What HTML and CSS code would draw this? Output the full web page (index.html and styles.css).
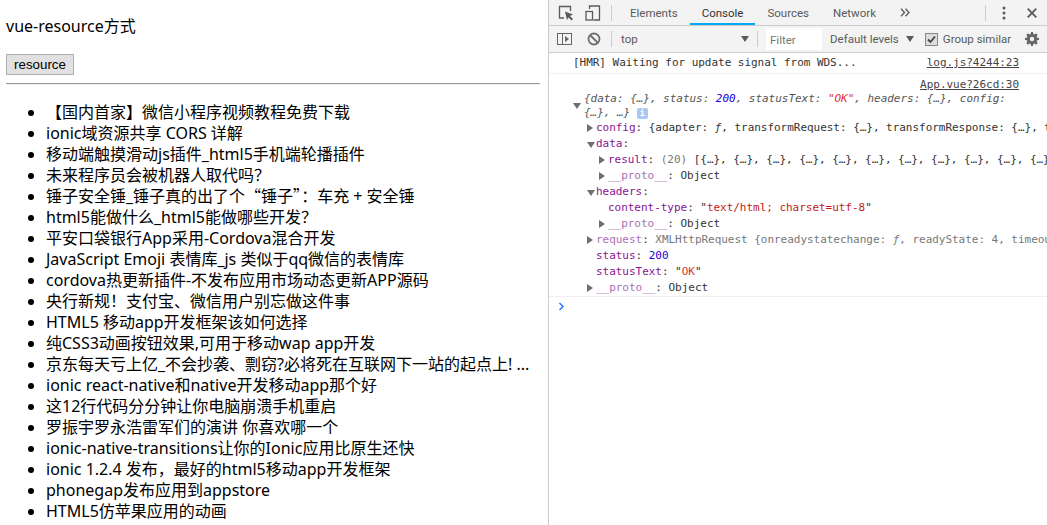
FILE: index.html
```html
<!DOCTYPE html>
<html lang="zh-CN">
<head>
    <meta charset="UTF-8">
    <title>vue-resource</title>
    <link rel="stylesheet" href="styles.css">
</head>
<body>
    <div class="page">
        <p class="page-title">vue-resource方式</p>
        <button class="page-btn">resource</button>
        <hr class="page-rule">
        <ul class="news-list">
            <li>【国内首家】微信小程序视频教程免费下载</li>
            <li>ionic域资源共享 CORS 详解</li>
            <li>移动端触摸滑动js插件_html5手机端轮播插件</li>
            <li>未来程序员会被机器人取代吗？</li>
            <li>锤子安全锤_锤子真的出了个<span class="cjk">“锤子”</span>：车充 + 安全锤</li>
            <li>html5能做什么_html5能做哪些开发？</li>
            <li>平安口袋银行App采用-Cordova混合开发</li>
            <li>JavaScript Emoji 表情库_js 类似于qq微信的表情库</li>
            <li>cordova热更新插件-不发布应用市场动态更新APP源码</li>
            <li>央行新规！支付宝、微信用户别忘做这件事</li>
            <li>HTML5 移动app开发框架该如何选择</li>
            <li>纯CSS3动画按钮效果,可用于移动wap app开发</li>
            <li>京东每天亏上亿_不会抄袭、剽窃?必将死在互联网下一站的起点上! ...</li>
            <li>ionic react-native和native开发移动app那个好</li>
            <li>这12行代码分分钟让你电脑崩溃手机重启</li>
            <li>罗振宇罗永浩雷军们的演讲 你喜欢哪一个</li>
            <li>ionic-native-transitions让你的Ionic应用比原生还快</li>
            <li>ionic 1.2.4 发布，最好的html5移动app开发框架</li>
            <li>phonegap发布应用到appstore</li>
            <li>HTML5仿苹果应用的动画</li>
        </ul>
    </div>

    <div class="devtools">
        <div class="tab-bar">
            <svg class="tb-icon inspect-icon" width="16" height="16" viewBox="0 0 16 16"><path d="M6 13H1.500V1.500h11V6" fill="none" stroke="#5a5a5a" stroke-width="1.300"/><path d="M7 6.500l8 3-3 1.500 3 3-1.400 1.400-3-3L9 15z" fill="#5a5a5a"/></svg>
            <svg class="tb-icon device-icon" width="16" height="16" viewBox="0 0 16 16"><path d="M4.500 4V1h10v14H8.500" fill="none" stroke="#5a5a5a" stroke-width="1.300"/><rect x="1" y="6.500" width="6.500" height="8.500" fill="none" stroke="#5a5a5a" stroke-width="1.300"/></svg>
            <span class="tb-sep"></span>
            <span class="tab first">Elements</span>
            <span class="tab active">Console</span>
            <span class="tab">Sources</span>
            <span class="tab">Network</span>
            <svg class="tab-more" width="10" height="9" viewBox="0 0 10 9"><path d="M1 .8l3.500 3.700L1 8.200M5.500 .8L9 4.500 5.500 8.200" fill="none" stroke="#5a5a5a" stroke-width="1.300"/></svg>
            <span class="tab-spacer"></span>
            <span class="tb-sep"></span>
            <svg class="tb-menu" width="4" height="14" viewBox="0 0 4 14"><circle cx="2" cy="2" r="1.500" fill="#5a5a5a"/><circle cx="2" cy="7" r="1.500" fill="#5a5a5a"/><circle cx="2" cy="12" r="1.500" fill="#5a5a5a"/></svg>
            <svg class="tb-close" width="10" height="10" viewBox="0 0 10 10"><path d="M.7.7l8.600 8.600M9.300.7L.7 9.300" stroke="#5a5a5a" stroke-width="1.800"/></svg>
        </div>
        <div class="filter-bar">
            <svg class="sidebar-icon" width="15" height="12" viewBox="0 0 15 12"><rect x=".5" y=".5" width="14" height="11" fill="none" stroke="#666"/><path d="M5.500 1v10" stroke="#666"/><path d="M8 3l4 3-4 3z" fill="#666"/></svg>
            <svg class="clear-icon" width="14" height="14" viewBox="0 0 14 14"><circle cx="7" cy="7" r="5.500" fill="none" stroke="#6e6e6e" stroke-width="1.800"/><path d="M3 3l8 8" stroke="#6e6e6e" stroke-width="1.800"/></svg>
            <span class="tb-sep"></span>
            <span class="context">top</span>
            <span class="caret"></span>
            <span class="tb-sep"></span>
            <span class="filter-input">Filter</span>
            <span class="levels">Default levels</span>
            <span class="caret small"></span>
            <span class="check"><svg width="9" height="9" viewBox="0 0 9 9"><path d="M1 4.500l2.500 2.500L8 1.500" fill="none" stroke="#444" stroke-width="1.800"/></svg></span>
            <span class="group">Group similar</span>
            <svg class="gear" width="14" height="14" viewBox="0 0 14 14"><path fill-rule="evenodd" fill="#666" d="M6 0h2l.3 1.900 1.100.5L11 1.300l1.700 1.700-1.100 1.600.5 1.100L14 6v2l-1.900.3-.5 1.100 1.100 1.600-1.700 1.700-1.600-1.100-1.100.5L8 14H6l-.3-1.900-1.100-.5L3 12.700 1.300 11l1.100-1.600-.5-1.100L0 8V6l1.900-.3.5-1.100L1.300 3 3 1.300l1.600 1.100 1.100-.5zM7 4.800a2.200 2.200 0 1 0 0 4.400 2.200 2.200 0 0 0 0-4.400z"/></svg>
        </div>
        <div class="console">
            <div class="msg msg-first">
                <a class="src">log.js?4244:23</a>
                <span class="line-text">[HMR] Waiting for update signal from WDS...</span>
            </div>
            <div class="msg msg-obj">
                <div class="src-row"><a class="src">App.vue?26cd:30</a></div>
                <div class="obj-head">
                    <span class="arrow open head-arrow"></span>
                    <div class="obj-summary"><i>{data: {…}, status: <b class="num">200</b>, statusText: <b class="str">"OK"</b>, headers: {…}, config:<br>{…}, …}</i> <span class="info">i</span></div>
                </div>
                <div class="row l1"><span class="arrow"></span><span class="key">config</span>: {adapter: <i>ƒ</i>, transformRequest: {…}, transformResponse: {…}, t</div>
                <div class="row l1"><span class="arrow open"></span><span class="key">data</span>:</div>
                <div class="row l2"><span class="arrow"></span><span class="key">result</span>: <span class="dim">(20)</span> [{…}, {…}, {…}, {…}, {…}, {…}, {…}, {…}, {…}, {…}, {…}</div>
                <div class="row l2"><span class="arrow"></span><span class="key pale">__proto__</span>: Object</div>
                <div class="row l1"><span class="arrow open"></span><span class="key">headers</span>:</div>
                <div class="row l2"><span class="arrow none"></span><span class="key">content-type</span>: "<span class="str-dark">text/html; charset=utf-8</span>"</div>
                <div class="row l2"><span class="arrow"></span><span class="key pale">__proto__</span>: Object</div>
                <div class="row l1"><span class="arrow"></span><span class="key pale">request</span>: <span class="dim">XMLHttpRequest {onreadystatechange: <i>ƒ</i>, readyState: 4, timeou</span></div>
                <div class="row l1"><span class="arrow none"></span><span class="key">status</span>: <span class="num">200</span></div>
                <div class="row l1"><span class="arrow none"></span><span class="key">statusText</span>: "<span class="str">OK</span>"</div>
                <div class="row l1"><span class="arrow"></span><span class="key pale">__proto__</span>: Object</div>
            </div>
            <div class="prompt"><svg width="7" height="9" viewBox="0 0 7 9"><path d="M1.500 1l3.500 3.500L1.500 8" fill="none" stroke="#367cf1" stroke-width="1.600"/></svg></div>
        </div>
    </div>
</body>
</html>
```

FILE: styles.css
```css
html, body {
    height: 100%;
    margin: 0;
    overflow: hidden;
}
body {
    display: flex;
    background-color: #fff;
    font-family: "Noto Sans", "Noto Sans CJK SC", sans-serif;
}

/* left page */
.page {
    width: 549px;
    flex: none;
    box-sizing: border-box;
    padding: 16px 8px 0 6px;
    border-right: 1px solid #ccc;
    font-size: 16px;
    color: #000;
}
.page-title {
    margin: 0 0 17px;
    line-height: 21px;
}
.page-btn {
    display: block;
    width: 68px;
    height: 21px;
    padding: 0;
    font: 13.33px "Liberation Sans", sans-serif;
    color: #000;
    background-color: #e1e1e1;
    border: 1px solid #adadad;
}
.page-rule {
    margin: 8px 0 0;
    border: none;
    border-top: 1px solid #9a9a9a;
    border-bottom: 1px solid #eee;
    height: 0;
}
.news-list {
    margin: 17px 0 0;
    padding-left: 40px;
    line-height: 21px;
    white-space: nowrap;
}
.cjk {
    font-family: "Noto Sans CJK SC", sans-serif;
    line-height: 1;
}

/* devtools */
.devtools {
    flex: 1;
    min-width: 0;
    display: flex;
    flex-direction: column;
    font-family: Roboto, sans-serif;
    font-size: 11.5px;
    color: #5a5a5a;
}
.tab-bar {
    height: 25px;
    flex: none;
    display: flex;
    align-items: center;
    background-color: #f3f3f3;
    border-bottom: 1px solid #ccc;
}
.tb-icon { flex: none; }
.inspect-icon { margin-left: 9px; }
.device-icon { margin-left: 11px; }
.tb-sep {
    width: 1px;
    height: 16px;
    background-color: #ccc;
    flex: none;
}
.device-icon + .tb-sep { margin-left: 10px; }
.tab {
    height: 25px;
    box-sizing: border-box;
    line-height: 27px;
    padding: 0 12px;
    flex: none;
}
.tab.first { margin-left: 6px; }
.tab.active {
    color: #333;
    border-bottom: 2px solid #03a9f4;
}
.tab-more { margin-left: 12px; flex: none; }
.tab-spacer { flex: 1; }
.tb-menu { margin: 0 21px 0 16px; flex: none; }
.tb-close { margin-right: 10px; flex: none; }

.filter-bar {
    height: 26px;
    flex: none;
    display: flex;
    align-items: center;
    background-color: #f3f3f3;
    border-bottom: 1px solid #ccc;
}
.sidebar-icon { margin-left: 8px; flex: none; }
.clear-icon { margin-left: 15px; flex: none; }
.clear-icon + .tb-sep { margin-left: 10px; }
.context { margin-left: 9px; width: 120px; flex: none; }
.caret {
    width: 0;
    height: 0;
    border-left: 4px solid transparent;
    border-right: 4px solid transparent;
    border-top: 6px solid #5a5a5a;
    flex: none;
}
.caret + .tb-sep { margin-left: 8px; }
.filter-input {
    width: 56px;
    height: 22px;
    line-height: 24px;
    box-sizing: border-box;
    padding-left: 4px;
    margin-left: 8px;
    background-color: #fff;
    color: #777;
    flex: none;
}
.levels { margin-left: 8px; flex: none; }
.caret.small { margin-left: 7px; }
.check {
    width: 11px;
    height: 11px;
    margin-left: 11px;
    display: flex;
    align-items: center;
    justify-content: center;
    background-color: #ddd;
    border: 1px solid #888;
    flex: none;
}
.group { margin-left: 5px; flex: none; white-space: nowrap; }
.gear { margin-left: 14px; flex: none; }

/* console */
.console {
    flex: 1;
    overflow: hidden;
    font-family: "DejaVu Sans Mono", monospace;
    font-size: 11px;
    letter-spacing: -0.03px;
    color: #333;
}
.msg {
    border-bottom: 1px solid #f0f0f0;
    white-space: nowrap;
    overflow: hidden;
}
.msg-first {
    height: 20px;
    line-height: 20px;
    padding-left: 24px;
}
.src {
    float: right;
    margin-right: 28px;
    color: #444;
    text-decoration: underline;
}
.src-row {
    height: 18px;
    line-height: 22px;
}
.obj-head {
    display: flex;
    align-items: center;
    padding-left: 24px;
}
.obj-summary {
    line-height: 14px;
    margin-left: 2px;
    color: #555;
}
.obj-summary b { font-weight: normal; }
.row {
    height: 16px;
    line-height: 16px;
}
.l1 { padding-left: 38px; }
.l2 { padding-left: 50px; }
.arrow {
    display: inline-block;
    width: 0;
    height: 0;
    margin-right: 3px;
    border-top: 4px solid transparent;
    border-bottom: 4px solid transparent;
    border-left: 6px solid #6e6e6e;
    vertical-align: -1px;
}
.arrow.open {
    border-left: 4px solid transparent;
    border-right: 4px solid transparent;
    border-top: 6px solid #6e6e6e;
    border-bottom: none;
    margin-right: 1px;
}
.arrow.none {
    border: none;
    width: 9px;
    margin-right: 0;
}
.key { color: #881391; }
.key.pale { color: #ad6fb5; }
.dim { color: #777; }
.num { color: #1c00cf; }
.str { color: #e03232; }
.str-dark { color: #c41a16; }
.info {
    display: inline-block;
    width: 11px;
    height: 11px;
    line-height: 11px;
    border-radius: 2px;
    background-color: #a8c8f5;
    color: #fff;
    font-size: 9px;
    font-weight: bold;
    text-align: center;
}
.prompt {
    height: 18px;
    padding-left: 9px;
    display: flex;
    align-items: center;
}
```
